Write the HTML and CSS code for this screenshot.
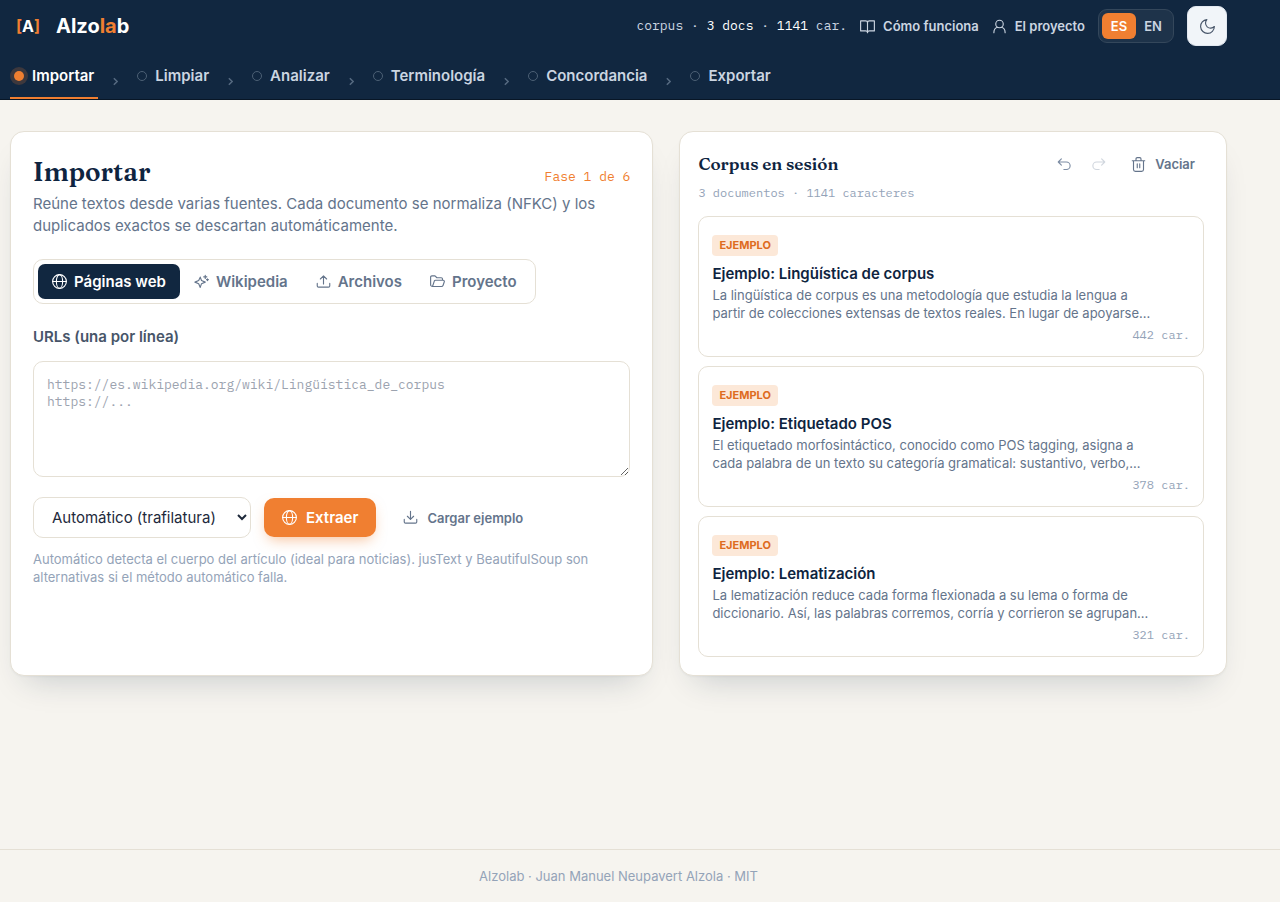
FILE: index.html
```html
<!DOCTYPE html>
<html lang="es">
<head>
    <meta charset="UTF-8">
    <meta name="viewport" content="width=device-width, initial-scale=1.0">
    <title>Alzolab</title>
    <link rel="stylesheet" href="styles.css">
</head>
<body>
    <!-- Shared icons -->
    <svg class="sprite" aria-hidden="true">
        <symbol id="globe" viewBox="0 0 24 24"><circle cx="12" cy="12" r="11"/><ellipse cx="12" cy="12" rx="5" ry="11"/><path d="M1 12h22"/></symbol>
        <symbol id="book" viewBox="0 0 24 24"><path d="M12 6v16M12 6a3 3 0 0 0-3-3H1v16h8a3 3 0 0 1 3 3 3 3 0 0 1 3-3h8V3h-8a3 3 0 0 0-3 3z"/></symbol>
        <symbol id="user" viewBox="0 0 24 24"><circle cx="12" cy="8" r="6"/><path d="M3 22c0-5 3-8 6-8.700M21 22c0-5-3-8-6-8.700"/></symbol>
        <symbol id="moon" viewBox="0 0 24 24"><path d="M11 1a8 8 0 0 0 12 11A11 11 0 1 1 11 1z"/></symbol>
        <symbol id="sparkles" viewBox="0 0 24 24"><path d="M10 5l2 5.500 6 2.500-6 2.500-2 6-2.500-6-6-2.500 6-2.500zM18 2v5M15.500 4.500h5M21.500 7.500v3M20 9h3"/></symbol>
        <symbol id="upload" viewBox="0 0 24 24"><path d="M12 16V3M7 8l5-5 5 5M2 15v4a2 2 0 0 0 2 2h16a2 2 0 0 0 2-2v-4"/></symbol>
        <symbol id="folder" viewBox="0 0 24 24"><path d="M4 20l3-9a2 2 0 0 1 2-1h12a2 2 0 0 1 2 2l-2 6a3 3 0 0 1-3 2H4a3 3 0 0 1-3-3V5a2 2 0 0 1 2-2h5l3 3h7a2 2 0 0 1 2 2v2"/></symbol>
        <symbol id="download" viewBox="0 0 24 24"><path d="M12 2v13M7 10l5 5 5-5M2 15v4a2 2 0 0 0 2 2h16a2 2 0 0 0 2-2v-4"/></symbol>
        <symbol id="undo" viewBox="0 0 24 24"><path d="M7 3L2 8l5 5M2 8h13a6 6 0 0 1 0 12h-4"/></symbol>
        <symbol id="redo" viewBox="0 0 24 24"><path d="M17 3l5 5-5 5M22 8H9a6 6 0 0 0 0 12h4"/></symbol>
        <symbol id="trash" viewBox="0 0 24 24"><path d="M2 6h20M4 6v14a3 3 0 0 0 3 3h10a3 3 0 0 0 3-3V6M8 6V3a2 2 0 0 1 2-2h4a2 2 0 0 1 2 2v3M10 11v6M14 11v6"/></symbol>
        <symbol id="chevron" viewBox="0 0 6 10"><path d="M1 1l4 4-4 4"/></symbol>
    </svg>

    <header class="header">
        <div class="container topbar">
            <a href="#" class="brand">
                <span class="brand-mark"><i>[</i>A<i>]</i></span>
                <span class="brand-name">Alzo<i>la</i>b</span>
            </a>
            <div class="top-actions">
                <span class="corpus-status">corpus · <b>3 docs</b> · <b>1141</b> car.</span>
                <a href="#" class="top-link"><svg class="icon"><use href="#book"/></svg>Cómo funciona</a>
                <a href="#" class="top-link"><svg class="icon"><use href="#user"/></svg>El proyecto</a>
                <div class="lang">
                    <button type="button" class="active">ES</button>
                    <button type="button">EN</button>
                </div>
                <button type="button" class="theme-btn" aria-label="Tema oscuro"><svg class="icon"><use href="#moon"/></svg></button>
            </div>
        </div>
        <nav class="container phases">
            <a href="#" class="phase active"><span class="dot"></span>Importar</a>
            <svg class="sep"><use href="#chevron"/></svg>
            <a href="#" class="phase"><span class="dot"></span>Limpiar</a>
            <svg class="sep"><use href="#chevron"/></svg>
            <a href="#" class="phase"><span class="dot"></span>Analizar</a>
            <svg class="sep"><use href="#chevron"/></svg>
            <a href="#" class="phase"><span class="dot"></span>Terminología</a>
            <svg class="sep"><use href="#chevron"/></svg>
            <a href="#" class="phase"><span class="dot"></span>Concordancia</a>
            <svg class="sep"><use href="#chevron"/></svg>
            <a href="#" class="phase"><span class="dot"></span>Exportar</a>
        </nav>
    </header>

    <main class="container main">
        <section class="card import-card">
            <div class="card-head">
                <h1>Importar</h1>
                <span class="phase-count">Fase 1 de 6</span>
            </div>
            <p class="intro">Reúne textos desde varias fuentes. Cada documento se normaliza (NFKC) y los duplicados exactos se descartan automáticamente.</p>

            <div class="tabs">
                <button type="button" class="tab active"><svg class="icon"><use href="#globe"/></svg>Páginas web</button>
                <button type="button" class="tab"><svg class="icon"><use href="#sparkles"/></svg>Wikipedia</button>
                <button type="button" class="tab"><svg class="icon"><use href="#upload"/></svg>Archivos</button>
                <button type="button" class="tab"><svg class="icon"><use href="#folder"/></svg>Proyecto</button>
            </div>

            <label class="field-label" for="urls">URLs (una por línea)</label>
            <textarea id="urls" class="urls" placeholder="https://es.wikipedia.org/wiki/Lingüística_de_corpus&#10;https://..."></textarea>

            <div class="actions">
                <select class="method" aria-label="Método de extracción">
                    <option>Automático (trafilatura)</option>
                    <option>jusText</option>
                    <option>BeautifulSoup</option>
                </select>
                <button type="button" class="btn-primary"><svg class="icon"><use href="#globe"/></svg>Extraer</button>
                <button type="button" class="btn-ghost"><svg class="icon"><use href="#download"/></svg>Cargar ejemplo</button>
            </div>
            <p class="hint">Automático detecta el cuerpo del artículo (ideal para noticias). jusText y BeautifulSoup son alternativas si el método automático falla.</p>
        </section>

        <section class="card corpus-card">
            <div class="corpus-head">
                <h2>Corpus en sesión</h2>
                <div class="corpus-tools">
                    <button type="button" class="icon-btn" aria-label="Deshacer"><svg class="icon"><use href="#undo"/></svg></button>
                    <button type="button" class="icon-btn" aria-label="Rehacer" disabled><svg class="icon"><use href="#redo"/></svg></button>
                    <button type="button" class="btn-ghost"><svg class="icon"><use href="#trash"/></svg>Vaciar</button>
                </div>
            </div>
            <p class="corpus-meta">3 documentos · 1141 caracteres</p>

            <div class="docs">
                <article class="doc">
                    <span class="badge">EJEMPLO</span>
                    <h3>Ejemplo: Lingüística de corpus</h3>
                    <p>La lingüística de corpus es una metodología que estudia la lengua a partir de colecciones extensas de textos reales. En lugar de apoyarse...</p>
                    <span class="doc-size">442 car.</span>
                </article>
                <article class="doc">
                    <span class="badge">EJEMPLO</span>
                    <h3>Ejemplo: Etiquetado POS</h3>
                    <p>El etiquetado morfosintáctico, conocido como POS tagging, asigna a cada palabra de un texto su categoría gramatical: sustantivo, verbo,...</p>
                    <span class="doc-size">378 car.</span>
                </article>
                <article class="doc">
                    <span class="badge">EJEMPLO</span>
                    <h3>Ejemplo: Lematización</h3>
                    <p>La lematización reduce cada forma flexionada a su lema o forma de diccionario. Así, las palabras corremos, corría y corrieron se agrupan...</p>
                    <span class="doc-size">321 car.</span>
                </article>
            </div>
        </section>
    </main>

    <footer class="footer">
        <div class="container">Alzolab · Juan Manuel Neupavert Alzola · MIT</div>
    </footer>
</body>
</html>
```
FILE: styles.css
```css
:root {
    --navy: #112740;
    --ink: #0e2440;
    --orange: #f07f31;
    --slate: #64748b;
    --muted: #94a3b8;
    --line: #e5e0d5;
    --paper: #f6f4ef;
    --mono: "IBM Plex Mono", "Liberation Mono", monospace;
    --serif: "Fraunces", "Liberation Serif", serif;
}

* {
    margin: 0;
    padding: 0;
    box-sizing: border-box;
}

body {
    min-height: 100vh;
    display: flex;
    flex-direction: column;
    background: var(--paper);
    color: var(--ink);
    font: 15px/22px Inter, sans-serif;
}

button, select, textarea {
    font: inherit;
    color: inherit;
    border: 0;
    background: none;
}

button {
    cursor: pointer;
}

a {
    color: inherit;
    text-decoration: none;
}

i {
    font-style: normal;
    color: var(--orange);
}

.sprite {
    position: absolute;
    width: 0;
    height: 0;
}

.icon {
    width: 15px;
    height: 15px;
    flex-shrink: 0;
    fill: none;
    stroke: currentColor;
    stroke-width: 1.8;
    stroke-linecap: round;
    stroke-linejoin: round;
}

.container {
    padding: 0 53px 0 10px;
}

/* Header */
.header {
    background: var(--navy);
    color: #cbd5e1;
    border-bottom: 1px solid #081626;
}

.topbar {
    display: flex;
    justify-content: space-between;
    align-items: center;
    height: 52px;
}

.brand {
    display: flex;
    align-items: center;
    gap: 16px;
    padding-left: 6px;
    color: #fff;
    font-weight: 700;
}

.brand-mark {
    font-size: 16px;
}

.brand-name {
    font-size: 20px;
}

.top-actions {
    display: flex;
    align-items: center;
    gap: 13px;
}

.corpus-status {
    font: 13px/20px var(--mono);
}

.corpus-status b {
    color: #fff;
    font-weight: 400;
}

.top-link {
    display: flex;
    align-items: center;
    gap: 8px;
    font-size: 13px;
    font-weight: 600;
}

.lang {
    display: flex;
    padding: 3px;
    border: 1px solid #34475b;
    border-radius: 9px;
    background: #1e334a;
}

.lang button {
    width: 34px;
    height: 26px;
    border-radius: 6px;
    font-size: 13px;
    font-weight: 600;
}

.lang .active {
    background: var(--orange);
    color: #fff;
}

.theme-btn {
    display: flex;
    align-items: center;
    justify-content: center;
    width: 40px;
    height: 40px;
    border: 1px solid #e2e8f0;
    border-radius: 9px;
    background: #f1f5f9;
    color: #475569;
}

.phases {
    display: flex;
    align-items: center;
}

.phase {
    display: flex;
    align-items: center;
    gap: 8px;
    height: 47px;
    padding: 3px 4px 0;
    border-bottom: 2px solid transparent;
    font-weight: 600;
}

.phase.active {
    color: #fff;
    border-color: var(--orange);
}

.dot {
    width: 10px;
    height: 10px;
    border: 1px solid #4c6075;
    border-radius: 50%;
}

.active .dot {
    border: 0;
    background: var(--orange);
    box-shadow: 0 0 0 4px rgba(240, 127, 49, 0.2);
}

.sep {
    width: 5px;
    height: 9px;
    margin: 11px 15px 0;
    fill: none;
    stroke: #566a80;
    stroke-width: 1.8;
}

/* Cards */
.main {
    flex: 1;
    display: grid;
    grid-template-columns: 1.175fr 1fr;
    gap: 26px;
    align-content: start;
    padding-top: 31px;
    padding-bottom: 31px;
}

.card {
    background: #fff;
    border: 1px solid var(--line);
    border-radius: 14px;
    box-shadow: 0 1px 2px rgba(17, 39, 64, 0.04), 0 18px 32px -16px rgba(17, 39, 64, 0.22);
}

.import-card {
    padding: 22px;
}

.card-head {
    display: flex;
    justify-content: space-between;
    align-items: baseline;
}

h1 {
    font: 600 26px/36px var(--serif);
    font-optical-sizing: none;
}

.phase-count {
    font: 13px/20px var(--mono);
    color: var(--orange);
}

.intro {
    margin-top: 3px;
    color: var(--slate);
}

.tabs {
    display: inline-flex;
    margin: 22px 0;
    padding: 4px;
    border: 1px solid var(--line);
    border-radius: 10px;
}

.tab {
    display: flex;
    align-items: center;
    gap: 7px;
    height: 35px;
    padding: 0 14px;
    border-radius: 7px;
    font-weight: 600;
    color: var(--slate);
}

.tab.active {
    background: var(--navy);
    color: #fff;
}

.field-label {
    display: block;
    margin-bottom: 13px;
    font-weight: 600;
    color: #475569;
}

.urls {
    display: block;
    width: 100%;
    height: 116px;
    padding: 14px 13px;
    border: 1px solid var(--line);
    border-radius: 10px;
    font: 13px/17px var(--mono);
    resize: vertical;
}

.urls::placeholder {
    color: #9ca3af;
}

.actions {
    display: flex;
    align-items: center;
    gap: 13px;
    margin: 20px 0 12px;
}

.method {
    width: 218px;
    height: 41px;
    padding: 0 0 0 14px;
    border: 1px solid var(--line);
    border-radius: 10px;
    background: #fff;
    color: #1e293b;
}

.btn-primary {
    display: flex;
    align-items: center;
    gap: 9px;
    height: 39px;
    padding: 0 18px;
    border-radius: 10px;
    background: var(--orange);
    color: #fff;
    font-weight: 600;
    box-shadow: 0 6px 14px -4px rgba(240, 127, 49, 0.5);
}

.btn-ghost {
    display: flex;
    align-items: center;
    gap: 9px;
    padding: 0 14px;
    font-size: 13px;
    font-weight: 600;
    color: var(--slate);
}

.hint {
    font-size: 13px;
    line-height: 18px;
    color: var(--muted);
}

/* Corpus panel */
.corpus-card {
    padding: 18px 22px 18px 18px;
}

.corpus-head {
    display: flex;
    justify-content: space-between;
    align-items: center;
    height: 28px;
}

h2 {
    font: 600 17px/28px var(--serif);
    font-optical-sizing: none;
}

.corpus-tools {
    display: flex;
    align-items: center;
}

.corpus-tools .btn-ghost {
    padding: 0 9px 0 16px;
}

.icon-btn {
    display: flex;
    width: 34px;
    justify-content: center;
    color: #7c8ca3;
}

.icon-btn:disabled {
    opacity: 0.35;
}

.corpus-meta {
    margin: 5px 0 13px;
    font: 12px/20px var(--mono);
    color: var(--muted);
}

.docs {
    display: flex;
    flex-direction: column;
    gap: 9px;
}

.doc {
    display: flex;
    flex-direction: column;
    align-items: flex-start;
    padding: 18px 13px 11px;
    border: 1px solid var(--line);
    border-radius: 10px;
}

.badge {
    padding: 0 7px;
    border-radius: 4px;
    background: #fce8d8;
    color: #de6b20;
    font-size: 11px;
    line-height: 21px;
    font-weight: 700;
}

h3 {
    margin-top: 6px;
    font-size: 15px;
    line-height: 24px;
    font-weight: 600;
}

.doc p {
    padding-right: 32px;
    font-size: 13px;
    line-height: 18px;
    color: var(--slate);
}

.doc-size {
    align-self: flex-end;
    margin-top: 3px;
    font: 12px/20px var(--mono);
    color: var(--muted);
}

.footer {
    padding: 16px 0;
    border-top: 1px solid var(--line);
    font-size: 13px;
    line-height: 20px;
    text-align: center;
    color: var(--muted);
}
```
